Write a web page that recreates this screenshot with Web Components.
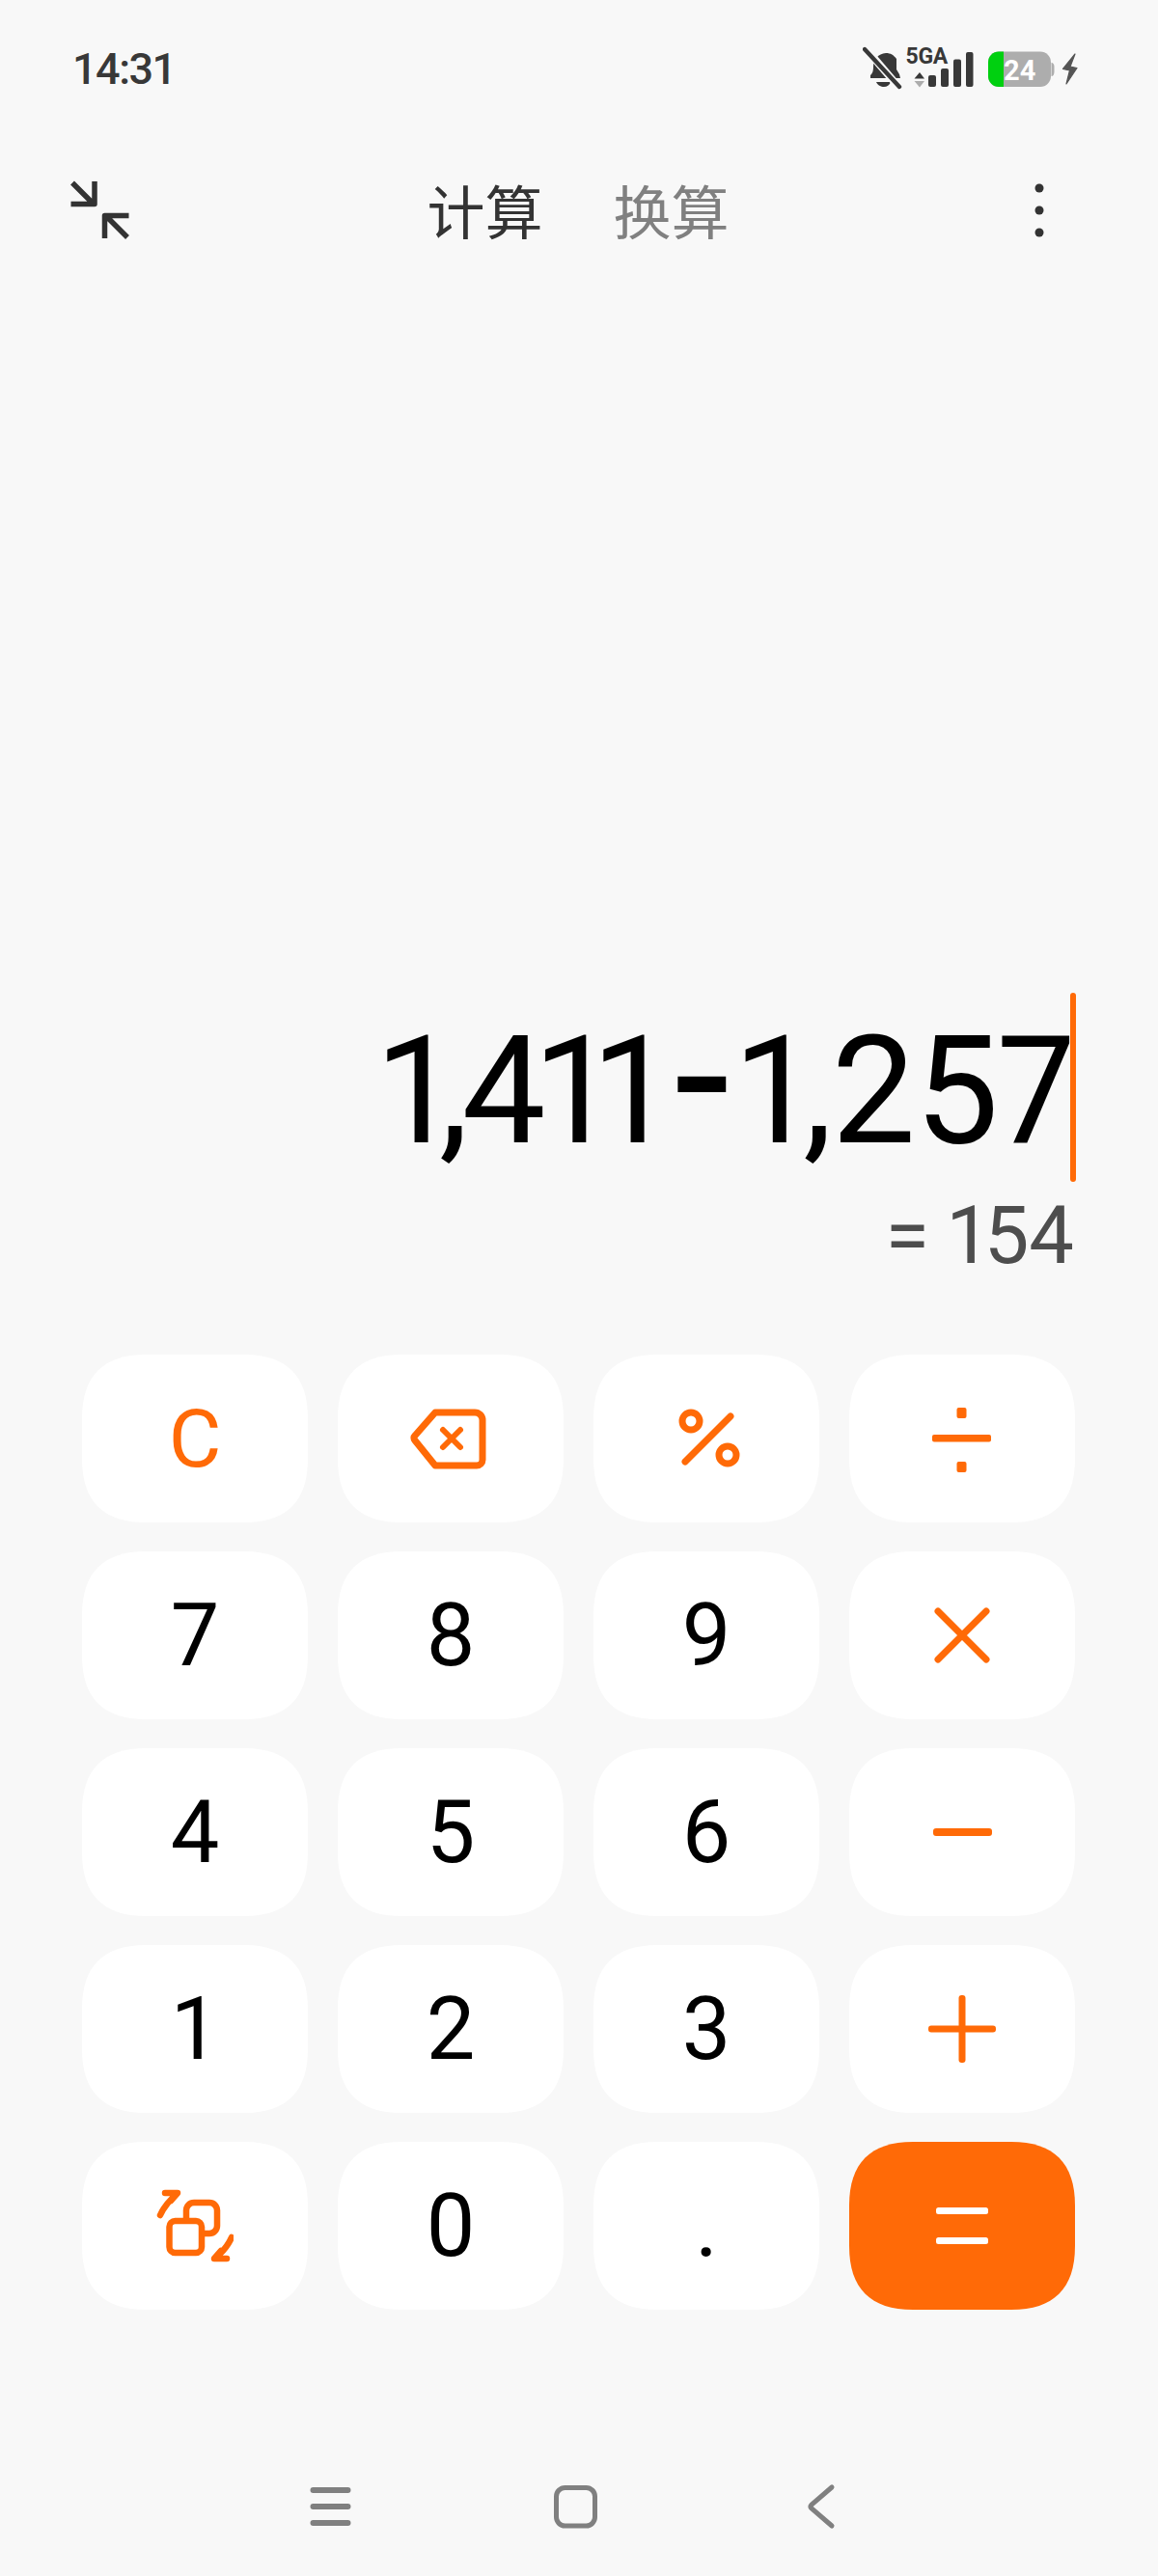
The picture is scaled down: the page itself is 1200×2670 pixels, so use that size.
<!DOCTYPE html>
<html>
<head>
<meta charset="utf-8">
<style>
  html, body { margin: 0; background: #f8f8f8; }
</style>
</head>
<body>
<calc-app></calc-app>
<script>
"use strict";

const ORANGE = "#ff6a07";

customElements.define("calc-status-bar", class extends HTMLElement {
  constructor() {
    super();
    this.attachShadow({mode: "open"}).innerHTML = `
      <style>
        :host {
          display: flex;
          justify-content: space-between;
          align-items: flex-start;
          height: 142px;
          padding: 46px 82px 0 75px;
          box-sizing: border-box;
          font-family: Roboto, sans-serif;
          color: #383838;
        }
        #time {
          font-size: 45px;
          font-weight: 500;
          line-height: 52px;
          letter-spacing: -1.5px;
        }
        svg { display: block; margin-top: -6px; }
        text { font-family: Roboto, sans-serif; font-weight: 700; }
      </style>
      <div id="time">14:31</div>
      <svg width="224" height="54" viewBox="894 40 224 54">
        <path d="M902 78c2-2 3-4 3-9 0-8 5-13 13-14 5 0 8 2 11 6v11l3 5 1 4h-31z" fill="#383838"/>
        <path d="M908 85h15c-1 3-4 5-7 5s-7-2-8-5z" fill="#383838"/>
        <path d="M897 50l35 41" stroke="#f8f8f8" stroke-width="8"/>
        <path d="M896 51l36 39" stroke="#383838" stroke-width="4.4" stroke-linecap="round"/>
        <text x="938.500" y="66" font-size="23" letter-spacing="-.3" fill="#383838">5GA</text>
        <path d="M953 75l5 6.500h-10.500z" fill="#383838"/>
        <path d="M953 90.500l5-6.500h-10.500z" fill="#adadad"/>
        <rect x="962" y="78" width="8" height="12" rx="2" fill="#383838"/>
        <rect x="975" y="71" width="8" height="19" rx="2" fill="#383838"/>
        <rect x="988" y="61.500" width="8" height="28.500" rx="2" fill="#383838"/>
        <rect x="1001" y="54" width="7.500" height="36" rx="2" fill="#383838"/>
        <rect x="1024" y="53.500" width="65" height="36.500" rx="11" fill="#adadad"/>
        <path d="M1040 53.500h-5a11 11 0 0 0-11 11v14.500a11 11 0 0 0 11 11h5z" fill="#00d010"/>
        <path d="M1089.500 65c2 0 3 2 3 4v5c0 3-1 5-3 5z" fill="#adadad"/>
        <text x="1040" y="83" font-size="29" fill="#fff">24</text>
        <path d="M1114 56l-12.500 15.500 7 1.500-3.500 14 11-16.500-7-1.500 5-13z" fill="#555" stroke="#555" stroke-width="1.200" stroke-linejoin="round"/>
      </svg>
    `;
  }
});

customElements.define("calc-top-bar", class extends HTMLElement {
  constructor() {
    super();
    this.attachShadow({mode: "open"}).innerHTML = `
      <style>
        :host {
          display: grid;
          grid-template-columns: 1fr auto 1fr;
          align-items: center;
          height: 152px;
          box-sizing: border-box;
          font-family: "Noto Sans CJK SC", sans-serif;
        }
        #shrink { margin-left: 72px; display: block; }
        #tabs {
          display: flex;
          gap: 73px;
          font-size: 60px;
          line-height: 76px;
          color: #333;
          margin: -2px 0 0 -2px;
        }
        #other { color: #808080; }
        #more { justify-self: end; margin-right: 118px; display: block; }
      </style>
      <svg id="shrink" width="64" height="64" viewBox="72 187 64 64" fill="none" stroke="#333" stroke-width="5.500" stroke-linejoin="round">
        <path d="M75 190.500l22 22M98 189v23.500h-24.500"/>
        <path d="M132 247l-22-22M108.500 248v-23.500h25"/>
      </svg>
      <div id="tabs"><span>计算</span><span id="other">换算</span></div>
      <svg id="more" width="10" height="56" viewBox="0 0 10 56" fill="#333">
        <circle cx="5" cy="5" r="4.500"/>
        <circle cx="5" cy="28" r="4.500"/>
        <circle cx="5" cy="51" r="4.500"/>
      </svg>
    `;
  }
});

customElements.define("calc-display", class extends HTMLElement {
  constructor() {
    super();
    this.attachShadow({mode: "open"}).innerHTML = `
      <style>
        :host {
          display: flex;
          flex-direction: column;
          align-items: flex-end;
          height: 1110px;
          padding: 0 85px 0 0;
          box-sizing: border-box;
          justify-content: flex-end;
          font-family: Roboto, sans-serif;
          font-feature-settings: "pnum";
        }
        #expr {
          display: flex;
          align-items: center;
          height: 196px;
          font-size: 155px;
          color: #000;
          white-space: nowrap;
        }
        #text { padding-top: 8px; }
        #caret {
          width: 6px;
          height: 196px;
          border-radius: 3px;
          background: ${ORANGE};
          margin-left: -4px;
        }
        #result {
          font-size: 83px;
          line-height: 96px;
          color: #4d4d4d;
          margin: 8px 2px 75px 0;
        }
      </style>
      <div id="expr"><span id="text"><slot name="expr"></slot></span><div id="caret"></div></div>
      <div id="result"><slot name="result"></slot></div>
    `;
  }
});

customElements.define("calc-key", class extends HTMLElement {
  constructor() {
    super();
    this.attachShadow({mode: "open"}).innerHTML = `
      <style>
        :host {
          display: flex;
          align-items: center;
          justify-content: center;
          box-sizing: border-box;
          height: 174px;
          background: #fff;
          /* the keys are squircles, plain border-radius comes out too round */
          clip-path: path("M66 0H168C212 0 234 22 234 66V108C234 152 212 174 168 174H66C22 174 0 152 0 108V66C0 22 22 0 66 0Z");
          font-family: Roboto, sans-serif;
          font-size: 90px;
          color: #000;
          line-height: 1;
        }
        :host([num]) { padding-top: 2px; }
        :host([op]) { color: ${ORANGE}; font-size: 84px; }
        :host([accent]) { background: ${ORANGE}; color: #fff; }
      </style>
      <slot></slot>
    `;
  }
});

customElements.define("calc-keypad", class extends HTMLElement {
  constructor() {
    super();
    this.attachShadow({mode: "open"}).innerHTML = `
      <style>
        :host {
          display: grid;
          grid-template-columns: repeat(4, 234px);
          grid-auto-rows: 174px;
          column-gap: 31px;
          row-gap: 30px;
          padding: 0 0 0 85px;
        }
      </style>
      <slot></slot>
    `;
  }
});

customElements.define("calc-nav-bar", class extends HTMLElement {
  constructor() {
    super();
    this.attachShadow({mode: "open"}).innerHTML = `
      <style>
        :host { display: block; padding-top: 180px; }
        svg { display: block; }
      </style>
      <svg width="1200" height="50" viewBox="0 2575 1200 50" fill="none" stroke="#808080">
        <path d="M324.500 2582h36M324.500 2599h36M324.500 2616h36" stroke-width="6" stroke-linecap="round"/>
        <rect x="576.500" y="2579.500" width="40" height="39.500" rx="9" stroke-width="5"/>
        <path d="M862 2579l-21 18q-2 2 0 4l21 18" stroke-width="5" stroke-linecap="round"/>
      </svg>
    `;
  }
});

const ICONS = {
  back: `<svg style="margin-left:-6px" width="80" height="64" viewBox="424 1460 80 64" fill="none" stroke="${ORANGE}" stroke-width="7" stroke-linejoin="round" stroke-linecap="round">
    <path d="M451 1465h41a8 8 0 0 1 8 8v41a6 6 0 0 1-6 6h-43l-21-26q-2-3 0-5z"/>
    <path d="M459 1483l18 18M477 1483l-18 18" stroke-width="6"/></svg>`,
  percent: `<svg style="margin-left:5px" width="64" height="64" viewBox="702 1460 64 64" fill="none" stroke="${ORANGE}" stroke-width="7">
    <circle cx="715" cy="1474" r="9"/><circle cx="753" cy="1509" r="9"/>
    <path d="M756 1469l-47 47" stroke-width="7" stroke-linecap="round"/></svg>`,
  divide: `<svg width="62" height="70" viewBox="967 1457 62 70" fill="${ORANGE}">
    <rect x="992.500" y="1460" width="10" height="11" rx="2"/>
    <rect x="967" y="1488" width="61" height="7.500" rx="2"/>
    <rect x="992.500" y="1516" width="10" height="11" rx="2"/></svg>`,
  times: `<svg width="62" height="62" viewBox="966.500 1664 62 62" fill="none" stroke="${ORANGE}" stroke-width="7" stroke-linecap="round">
    <path d="M972.500 1670l50 50M1022.500 1670l-50 50"/></svg>`,
  minus: `<svg width="61" height="8" viewBox="0 0 61 8"><rect width="61" height="8" rx="3" fill="${ORANGE}"/></svg>`,
  plus: `<svg width="70" height="70" viewBox="0 0 70 70" fill="${ORANGE}">
    <rect x="0" y="31.500" width="70" height="7" rx="3"/><rect x="31.500" y="0" width="7" height="70" rx="3"/></svg>`,
  equals: `<svg width="54" height="38" viewBox="0 0 54 38" fill="#fff">
    <rect y="0" width="54" height="7" rx="2.500"/><rect y="31" width="54" height="7" rx="2.500"/></svg>`,
  convert: `<svg width="80" height="80" viewBox="162 2267 80 80" fill="none" stroke="${ORANGE}" stroke-width="6.500" stroke-linecap="round" stroke-linejoin="round">
    <rect x="175.500" y="2302" width="33.500" height="33" rx="6"/>
    <path d="M193 2299v-8a8 8 0 0 1 8-8h16a8 8 0 0 1 8 8v16a8 8 0 0 1-8 8h-5"/>
    <path d="M166 2296q4-9 12-17M171 2273h13l-7 8"/>
    <path d="M240 2319q-4 9-12 17M235 2341h-13l7-8"/></svg>`
};

customElements.define("calc-app", class extends HTMLElement {
  constructor() {
    super();
    const keys = [
      ["C", "op num"], [ICONS.back], [ICONS.percent], [ICONS.divide],
      ["7", "num"], ["8", "num"], ["9", "num"], [ICONS.times],
      ["4", "num"], ["5", "num"], ["6", "num"], [ICONS.minus],
      ["1", "num"], ["2", "num"], ["3", "num"], [ICONS.plus],
      [ICONS.convert], ["0", "num"], [".", "num"], [ICONS.equals, "accent"]
    ];
    const keyHtml = keys.map(([content, attrs]) =>
      `<calc-key ${attrs || ""}>${content}</calc-key>`).join("");
    this.attachShadow({mode: "open"}).innerHTML = `
      <style>
        :host { display: block; width: 1200px; height: 2670px; overflow: hidden; background: #f8f8f8; }
        /* tighter than Roboto's own spacing, and the minus is wider and thicker than its hyphen */
        .head { letter-spacing: -7px; }
        .tail { letter-spacing: -1px; }
        .minus { display: inline-block; margin: 0 17px 0 27px; transform: translateY(-15px) scale(1.35, 1.4); }
      </style>
      <calc-status-bar></calc-status-bar>
      <calc-top-bar></calc-top-bar>
      <calc-display>
        <span slot="expr"><span class="head">1,411</span><span class="minus">-</span><span class="tail">1,257</span></span>
        <span slot="result">= 154</span>
      </calc-display>
      <calc-keypad>${keyHtml}</calc-keypad>
      <calc-nav-bar></calc-nav-bar>
    `;
  }
});
</script>
</body>
</html>
